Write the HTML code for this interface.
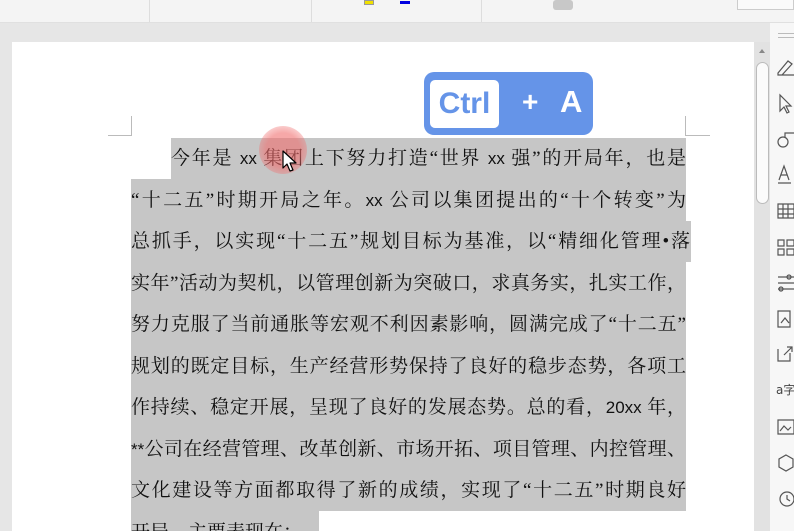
<!DOCTYPE html>
<html><head><meta charset="utf-8"><style>
*{margin:0;padding:0;box-sizing:border-box}
html,body{width:794px;height:531px;overflow:hidden}
body{background:#e6e6e6;position:relative;font-family:"Liberation Serif","Noto Serif CJK SC",serif}
.tb{position:absolute;left:0;top:0;width:794px;height:23px;background:#f4f4f4;border-bottom:1px solid #e0e0e0}
.sep{position:absolute;top:0;width:1px;height:22px;background:#ddd}
.page{position:absolute;left:12px;top:42px;width:742px;height:489px;background:#fff}
.scroll{position:absolute;left:754px;top:42px;width:16px;height:489px;background:#e2e2e2}
.thumb{position:absolute;left:756px;top:62px;width:13px;height:142px;border:1px solid #bbb;border-radius:7px;background:#fbfbfb}
.side{position:absolute;left:770px;top:23px;width:24px;height:508px;background:#f7f7f7}
.sel{position:absolute;background:#c6c6c6}
.ln{position:absolute;left:131px;width:555px;height:41.5px;line-height:41.5px;font-size:19px;color:#111;text-align:justify;text-align-last:justify;white-space:nowrap;overflow:visible}
.s{font-family:"Liberation Sans",sans-serif;font-size:17px}
.badge{position:absolute;left:424px;top:72px;width:169px;height:63px;background:#6594e8;border-radius:10px;font-family:"Liberation Sans","DejaVu Sans",sans-serif;font-weight:bold;color:#fff}
.ctrl{position:absolute;left:6px;top:8px;width:69px;height:48px;background:#fff;border-radius:5px;color:#6594e8;font-size:30px;line-height:48px;text-align:center}
.corner{position:absolute;background:#bbb}
</style></head><body>
<div class="tb">
<div class="sep" style="left:149px"></div><div class="sep" style="left:311px"></div><div class="sep" style="left:481px"></div>
<div style="position:absolute;left:364px;top:0;width:10px;height:5px;background:#f0e000;border:1px solid #999"></div>
<div style="position:absolute;left:400px;top:1px;width:10px;height:3px;background:#0000e0"></div>
<div style="position:absolute;left:553px;top:0;width:20px;height:10px;background:#c8c8c8;border-radius:3px"></div>
<div style="position:absolute;left:737px;top:0;width:57px;height:10px;border:1px solid #ccc;border-top:0;background:#fafafa"></div>
</div>
<div class="page"></div>
<div class="corner" style="left:131px;top:116px;width:1px;height:20px"></div>
<div class="corner" style="left:108px;top:135px;width:24px;height:1px"></div>
<div class="corner" style="left:685px;top:116px;width:1px;height:20px"></div>
<div class="corner" style="left:686px;top:135px;width:24px;height:1px"></div>
<div class="sel" style="left:171px;top:138px;width:515px;height:42px"></div>
<div class="sel" style="left:131px;top:179px;width:555px;height:332px"></div>
<div class="sel" style="left:686px;top:221px;width:5px;height:41px"></div>
<div class="sel" style="left:131px;top:510px;width:188px;height:21px"></div>
<div class="ln" style="top:138px;left:171px;width:515px">今年是 <span class="s">xx</span> 集团上下努力打造“世界 <span class="s">xx</span> 强”的开局年，也是</div>
<div class="ln" style="top:179.5px">“十二五”时期开局之年。<span class="s">xx</span> 公司以集团提出的“十个转变”为</div>
<div class="ln" style="top:221px;width:559px">总抓手，以实现“十二五”规划目标为基准，以“精细化管理•落</div>
<div class="ln" style="top:262.5px">实年”活动为契机，以管理创新为突破口，求真务实，扎实工作，</div>
<div class="ln" style="top:304px">努力克服了当前通胀等宏观不利因素影响，圆满完成了“十二五”</div>
<div class="ln" style="top:345.5px">规划的既定目标，生产经营形势保持了良好的稳步态势，各项工</div>
<div class="ln" style="top:387px">作持续、稳定开展，呈现了良好的发展态势。总的看，<span class="s">20xx</span> 年，</div>
<div class="ln" style="top:428.5px"><span class="s">**</span>公司在经营管理、改革创新、市场开拓、项目管理、内控管理、</div>
<div class="ln" style="top:470px">文化建设等方面都取得了新的成绩，实现了“十二五”时期良好</div>
<div class="ln" style="top:511.5px;text-align-last:left">开局，主要表现在：</div>
<div style="position:absolute;left:259px;top:126px;width:48px;height:48px;border-radius:50%;background:radial-gradient(circle,rgba(240,110,110,.6) 50%,rgba(240,120,120,0) 100%)"></div>
<svg style="position:absolute;left:282px;top:150px" width="16" height="24" viewBox="0 0 16 24"><path d="M1 1 L1 18 L5 14 L8 21 L11 20 L8 13 L14 13 Z" fill="#fff" stroke="#000" stroke-width="1.2" stroke-linejoin="round"/></svg>
<div class="badge"><div class="ctrl">Ctrl</div>
<div style="position:absolute;left:98px;top:14px;font-size:28px">+</div>
<div style="position:absolute;left:136px;top:12px;font-size:31px">A</div></div>
<div class="scroll"></div>
<div style="position:absolute;left:759px;top:49px;width:0;height:0;border-left:3px solid transparent;border-right:3px solid transparent;border-bottom:4px solid #888"></div>
<div class="thumb"></div>
<div class="side"></div>
<div style="position:absolute;left:778px;top:33px;width:16px;height:1px;background:#bbb"></div>
<div style="position:absolute;left:778px;top:37px;width:16px;height:1px;background:#bbb"></div>
<svg style="position:absolute;left:776px;top:0" width="18" height="531" viewBox="0 0 18 531" fill="none" stroke="#555" stroke-width="1.2">
<path d="M2 73 L12 61 L16 64 L6 75 H2Z M2 75 H18"/>
<path d="M4 95 L4 111 L8 107 L11 113 L13 112 L10 106 L15 106Z"/>
<circle cx="7" cy="142" r="5"/><path d="M9 137 V133 H18"/>
<path d="M3 180 L8 166 L13 180 M5 175 H11 M2 183 H15"/>
<path d="M2 204 H18 V218 H2Z M2 209 H18 M2 214 H18 M7 204 V218 M12 204 V218"/>
<path d="M2 240 H8 V246 H2Z M11 240 H18 V246 H11Z M2 249 H8 V255 H2Z M11 249 H18 V255 H11Z"/>
<path d="M2 277 H18 M2 283 H18 M2 289 H18"/><circle cx="13" cy="277" r="2"/><circle cx="5" cy="289" r="2"/>
<path d="M2 311 H14 V327 H2Z M5 323 L9 318 L13 323"/>
<path d="M2 349 V361 H14 V353 M8 355 L16 347 M11 347 H16 V352"/>
<path d="M2 420 H18 V434 H2Z M4 431 L8 426 L12 430 L15 427"/>
<path d="M10 455 L17 459 V467 L10 471 L3 467 V459Z"/>
<circle cx="11" cy="499" r="7"/><path d="M11 495 V499 L14 501"/>
</svg>
<div style="position:absolute;left:776px;top:382px;font-family:'DejaVu Sans','Noto Sans CJK SC',sans-serif;font-size:12px;line-height:16px;color:#444;white-space:nowrap">a字</div>
</body></html>
